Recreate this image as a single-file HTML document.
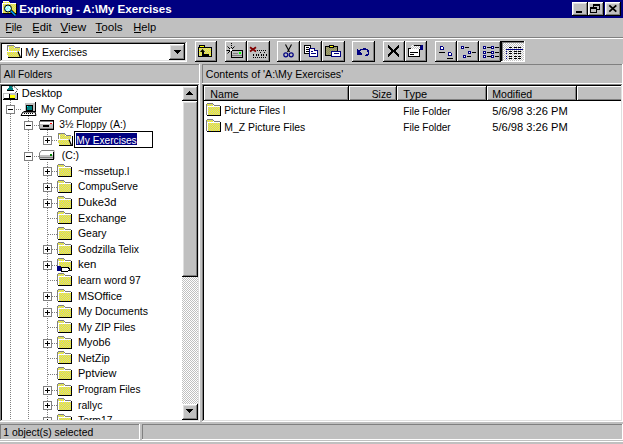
<!DOCTYPE html><html><head><meta charset="utf-8"><style>
html,body{margin:0;padding:0;background:#c0c0c0;}
body{width:623px;height:444px;overflow:hidden;font-family:"Liberation Sans",sans-serif;}
svg{display:block;}
text{shape-rendering:auto;}
</style></head><body><svg width="623" height="444" viewBox="0 0 623 444" shape-rendering="crispEdges" font-family="Liberation Sans, sans-serif"><rect x="0" y="0" width="623" height="444" fill="#c0c0c0"/>
<rect x="0" y="0" width="623" height="18" fill="#000080"/>
<text x="19.3" y="12.5" font-size="11.5" font-weight="bold" fill="#fff" textLength="152.4" lengthAdjust="spacingAndGlyphs">Exploring - A:\My Exercises</text>
<g id="ticon"></g>
<rect x="572" y="2" width="16" height="14" fill="#000"/>
<rect x="572" y="2" width="15" height="13" fill="#fff"/>
<rect x="573" y="3" width="14" height="12" fill="#808080"/>
<rect x="573" y="3" width="13" height="11" fill="#dfdfdf"/>
<rect x="574" y="4" width="12" height="10" fill="#c0c0c0"/>
<rect x="588" y="2" width="16" height="14" fill="#000"/>
<rect x="588" y="2" width="15" height="13" fill="#fff"/>
<rect x="589" y="3" width="14" height="12" fill="#808080"/>
<rect x="589" y="3" width="13" height="11" fill="#dfdfdf"/>
<rect x="590" y="4" width="12" height="10" fill="#c0c0c0"/>
<rect x="605" y="2" width="16" height="14" fill="#000"/>
<rect x="605" y="2" width="15" height="13" fill="#fff"/>
<rect x="606" y="3" width="14" height="12" fill="#808080"/>
<rect x="606" y="3" width="13" height="11" fill="#dfdfdf"/>
<rect x="607" y="4" width="12" height="10" fill="#c0c0c0"/>
<rect x="576" y="11" width="6" height="2" fill="#000"/>
<rect x="593" y="4" width="7" height="2" fill="#000"/>
<rect x="599" y="4" width="1" height="6" fill="#000"/>
<rect x="597" y="9" width="3" height="1" fill="#000"/>
<rect x="593" y="4" width="1" height="3" fill="#000"/>
<rect x="590" y="7" width="7" height="6" fill="#c0c0c0"/>
<rect x="590" y="7" width="7" height="2" fill="#000"/>
<rect x="590" y="7" width="1" height="6" fill="#000"/>
<rect x="596" y="7" width="1" height="6" fill="#000"/>
<rect x="590" y="12" width="7" height="1" fill="#000"/>
<path d="M609.3 5.3l7 6.4M616.3 5.3l-7 6.4" stroke="#000" stroke-width="1.8" shape-rendering="auto"/>
<text x="5.3" y="30.7" font-size="11.5" fill="#000" textLength="16.9" lengthAdjust="spacingAndGlyphs">File</text>
<text x="32.3" y="30.7" font-size="11.5" fill="#000" textLength="19.4" lengthAdjust="spacingAndGlyphs">Edit</text>
<text x="60.3" y="30.7" font-size="11.5" fill="#000" textLength="25.9" lengthAdjust="spacingAndGlyphs">View</text>
<text x="95.3" y="30.7" font-size="11.5" fill="#000" textLength="27.4" lengthAdjust="spacingAndGlyphs">Tools</text>
<text x="133.3" y="30.7" font-size="11.5" fill="#000" textLength="22.9" lengthAdjust="spacingAndGlyphs">Help</text>
<rect x="6" y="32" width="6" height="1" fill="#000"/>
<rect x="33" y="32" width="6" height="1" fill="#000"/>
<rect x="61" y="32" width="7" height="1" fill="#000"/>
<rect x="96" y="32" width="6" height="1" fill="#000"/>
<rect x="134" y="32" width="7" height="1" fill="#000"/>
<rect x="0" y="37" width="623" height="1" fill="#808080"/>
<rect x="0" y="38" width="623" height="1" fill="#fff"/>
<rect x="0" y="42" width="187" height="20" fill="#fff"/>
<rect x="0" y="42" width="186" height="19" fill="#808080"/>
<rect x="1" y="43" width="185" height="18" fill="#dfdfdf"/>
<rect x="1" y="43" width="184" height="17" fill="#000"/>
<rect x="2" y="44" width="183" height="16" fill="#fff"/>
<rect x="7" y="45" width="7" height="1" fill="#808080"/>
<rect x="7" y="46" width="1" height="6" fill="#808080"/>
<rect x="14" y="46" width="1" height="1" fill="#808080"/>
<rect x="15" y="47" width="5" height="1" fill="#808080"/>
<rect x="8" y="46" width="6" height="2" fill="url(#ydith)"/>
<rect x="8" y="48" width="12" height="3" fill="url(#ydith)"/>
<rect x="8" y="47" width="1" height="4" fill="#fff"/>
<rect x="21" y="48" width="1" height="10" fill="#000"/>
<rect x="8" y="57" width="14" height="1" fill="#000"/>
<path d="M6 51h12l2.5 6h-12z" fill="url(#ydith)"/>
<rect x="6" y="51" width="12" height="1" fill="#fff"/>
<path d="M18 51.5l2.5 6" stroke="#000" stroke-width="1.2" fill="none" shape-rendering="auto"/>
<text x="25.3" y="55.5" font-size="11.5" fill="#000" textLength="61.9" lengthAdjust="spacingAndGlyphs">My Exercises</text>
<rect x="169" y="44" width="16" height="16" fill="#000"/>
<rect x="169" y="44" width="15" height="15" fill="#fff"/>
<rect x="170" y="45" width="14" height="14" fill="#808080"/>
<rect x="170" y="45" width="13" height="13" fill="#dfdfdf"/>
<rect x="171" y="46" width="12" height="12" fill="#c0c0c0"/>
<path d="M173 50h8l-4 4z" fill="#000"/>
<rect x="195" y="41" width="22" height="21" fill="#000"/>
<rect x="195" y="41" width="21" height="20" fill="#fff"/>
<rect x="196" y="42" width="20" height="19" fill="#808080"/>
<rect x="196" y="42" width="19" height="18" fill="#c0c0c0"/>
<rect x="225" y="41" width="22" height="21" fill="#000"/>
<rect x="225" y="41" width="21" height="20" fill="#fff"/>
<rect x="226" y="42" width="20" height="19" fill="#808080"/>
<rect x="226" y="42" width="19" height="18" fill="#c0c0c0"/>
<rect x="247" y="41" width="23" height="21" fill="#000"/>
<rect x="247" y="41" width="22" height="20" fill="#fff"/>
<rect x="248" y="42" width="21" height="19" fill="#808080"/>
<rect x="248" y="42" width="20" height="18" fill="#c0c0c0"/>
<rect x="277" y="41" width="23" height="21" fill="#000"/>
<rect x="277" y="41" width="22" height="20" fill="#fff"/>
<rect x="278" y="42" width="21" height="19" fill="#808080"/>
<rect x="278" y="42" width="20" height="18" fill="#c0c0c0"/>
<rect x="300" y="41" width="22" height="21" fill="#000"/>
<rect x="300" y="41" width="21" height="20" fill="#fff"/>
<rect x="301" y="42" width="20" height="19" fill="#808080"/>
<rect x="301" y="42" width="19" height="18" fill="#c0c0c0"/>
<rect x="322" y="41" width="23" height="21" fill="#000"/>
<rect x="322" y="41" width="22" height="20" fill="#fff"/>
<rect x="323" y="42" width="21" height="19" fill="#808080"/>
<rect x="323" y="42" width="20" height="18" fill="#c0c0c0"/>
<rect x="352" y="41" width="23" height="21" fill="#000"/>
<rect x="352" y="41" width="22" height="20" fill="#fff"/>
<rect x="353" y="42" width="21" height="19" fill="#808080"/>
<rect x="353" y="42" width="20" height="18" fill="#c0c0c0"/>
<rect x="383" y="41" width="22" height="21" fill="#000"/>
<rect x="383" y="41" width="21" height="20" fill="#fff"/>
<rect x="384" y="42" width="20" height="19" fill="#808080"/>
<rect x="384" y="42" width="19" height="18" fill="#c0c0c0"/>
<rect x="405" y="41" width="22" height="21" fill="#000"/>
<rect x="405" y="41" width="21" height="20" fill="#fff"/>
<rect x="406" y="42" width="20" height="19" fill="#808080"/>
<rect x="406" y="42" width="19" height="18" fill="#c0c0c0"/>
<rect x="435" y="41" width="22" height="21" fill="#000"/>
<rect x="435" y="41" width="21" height="20" fill="#fff"/>
<rect x="436" y="42" width="20" height="19" fill="#808080"/>
<rect x="436" y="42" width="19" height="18" fill="#c0c0c0"/>
<rect x="457" y="41" width="22" height="21" fill="#000"/>
<rect x="457" y="41" width="21" height="20" fill="#fff"/>
<rect x="458" y="42" width="20" height="19" fill="#808080"/>
<rect x="458" y="42" width="19" height="18" fill="#c0c0c0"/>
<rect x="479" y="41" width="22" height="21" fill="#000"/>
<rect x="479" y="41" width="21" height="20" fill="#fff"/>
<rect x="480" y="42" width="20" height="19" fill="#808080"/>
<rect x="480" y="42" width="19" height="18" fill="#c0c0c0"/>
<rect x="501" y="41" width="24" height="21" fill="#fff"/>
<rect x="501" y="41" width="23" height="20" fill="#000"/>
<rect x="502" y="42" width="22" height="19" fill="#808080"/>
<defs><pattern id="chk" width="2" height="2" patternUnits="userSpaceOnUse"><rect width="2" height="2" fill="#fff"/><rect width="1" height="1" fill="#c0c0c0"/><rect x="1" y="1" width="1" height="1" fill="#c0c0c0"/></pattern></defs>
<rect x="503" y="43" width="21" height="18" fill="url(#chk)"/>
<rect x="199" y="45" width="6" height="2" fill="#000"/>
<rect x="200" y="46" width="4" height="1" fill="#ffff00"/>
<rect x="198" y="47" width="14" height="10" fill="#000"/>
<rect x="199" y="48" width="12" height="8" fill="url(#ydith)"/>
<path d="M202.5 49l-2.5 3h5z" fill="#000" shape-rendering="auto"/>
<rect x="202" y="51" width="2" height="4" fill="#000"/>
<rect x="202" y="54" width="7" height="2" fill="#000"/>
<rect x="231" y="50" width="12" height="8" fill="#000"/>
<rect x="232" y="51" width="10" height="6" fill="#c0c0c0"/>
<rect x="233" y="53" width="5" height="1" fill="#808080"/>
<rect x="239" y="52" width="2" height="2" fill="#00ff00"/>
<rect x="232" y="55" width="10" height="1" fill="#808080"/>
<rect x="231" y="43" width="1" height="1" fill="#000"/>
<rect x="231" y="45" width="1" height="1" fill="#000"/>
<rect x="231" y="47" width="1" height="1" fill="#000"/>
<path d="M227.5 46.5l3 3M227.5 53.5l3-3M234.5 46.5l-3 3M226.5 50.5h3.5" stroke="#000" stroke-width="1" shape-rendering="auto"/>
<rect x="230" y="49" width="2" height="2" fill="#fff"/>
<path d="M250 47.2l6 4.4M256 47.2l-6 4.4" stroke="#800000" stroke-width="1.8" shape-rendering="auto"/>
<rect x="257" y="50" width="1" height="1" fill="#000"/>
<rect x="259" y="50" width="1" height="1" fill="#000"/>
<rect x="261" y="50" width="1" height="1" fill="#000"/>
<rect x="263" y="50" width="1" height="1" fill="#000"/>
<rect x="265" y="50" width="1" height="1" fill="#000"/>
<rect x="260" y="52" width="1" height="1" fill="#000"/>
<rect x="264" y="52" width="1" height="1" fill="#000"/>
<rect x="253" y="54" width="1" height="2" fill="#000"/>
<rect x="256" y="54" width="1" height="2" fill="#000"/>
<rect x="258" y="54" width="1" height="2" fill="#000"/>
<rect x="261" y="54" width="1" height="2" fill="#000"/>
<rect x="263" y="54" width="1" height="2" fill="#000"/>
<rect x="266" y="54" width="1" height="2" fill="#000"/>
<rect x="253" y="57" width="1" height="1" fill="#000"/>
<rect x="255" y="57" width="1" height="1" fill="#000"/>
<rect x="257" y="57" width="1" height="1" fill="#000"/>
<rect x="259" y="57" width="1" height="1" fill="#000"/>
<rect x="261" y="57" width="1" height="1" fill="#000"/>
<rect x="263" y="57" width="1" height="1" fill="#000"/>
<rect x="265" y="57" width="1" height="1" fill="#000"/>
<path d="M285.5 44.5l4 7.5M291.5 44.5l-4 7.5" stroke="#000" stroke-width="1.1" shape-rendering="auto"/>
<circle cx="285.8" cy="54.8" r="2" fill="none" stroke="#000080" stroke-width="1.2" shape-rendering="auto"/><circle cx="291.2" cy="54.8" r="2" fill="none" stroke="#000080" stroke-width="1.2" shape-rendering="auto"/>
<rect x="304" y="45" width="7" height="9" fill="#000"/>
<rect x="305" y="46" width="5" height="7" fill="#fff"/>
<rect x="306" y="47" width="3" height="1" fill="#000"/>
<rect x="306" y="49" width="3" height="1" fill="#000"/>
<rect x="306" y="51" width="3" height="1" fill="#000"/>
<rect x="309" y="48" width="9" height="9" fill="#000080"/>
<rect x="310" y="49" width="7" height="7" fill="#fff"/>
<rect x="315" y="48" width="3" height="2" fill="#c0c0c0"/>
<rect x="314" y="48" width="1" height="3" fill="#000080"/>
<rect x="314" y="50" width="4" height="1" fill="#000080"/>
<rect x="311" y="51" width="2" height="1" fill="#000080"/>
<rect x="311" y="53" width="5" height="1" fill="#000080"/>
<rect x="325" y="46" width="13" height="10" fill="#000"/>
<rect x="326" y="47" width="11" height="8" fill="#808040"/>
<rect x="326" y="47" width="11" height="8" fill="url(#chk)" opacity="0.25"/>
<rect x="329" y="45" width="5" height="3" fill="#000"/>
<rect x="330" y="46" width="3" height="1" fill="#ffff00"/>
<rect x="331" y="51" width="10" height="6" fill="#000080"/>
<rect x="332" y="52" width="8" height="4" fill="#fff"/>
<rect x="334" y="53" width="5" height="1" fill="#000080"/>
<path d="M359 51.5c2-3 8-3.5 9.5 0c1 2.5-1 4-3 3.5" fill="none" stroke="#000080" stroke-width="1.6"/>
<path d="M357 48.5v6h5.5z" fill="#000080"/>
<path d="M388 46l11 10M399 46l-11 10" stroke="#000" stroke-width="2"/>
<rect x="408" y="48" width="12" height="9" fill="#000"/>
<rect x="409" y="49" width="10" height="7" fill="#fff"/>
<rect x="410" y="52" width="8" height="1" fill="#000"/>
<rect x="410" y="54" width="4" height="1" fill="#000"/>
<rect x="411" y="45" width="10" height="4" fill="url(#chk)"/>
<rect x="420" y="45" width="3" height="5" fill="#000080"/>
<rect x="414" y="45" width="7" height="1" fill="#000"/>
<rect x="440" y="46" width="4" height="4" fill="#000080"/>
<rect x="441" y="47" width="2" height="2" fill="#fff"/>
<rect x="443" y="46" width="1" height="1" fill="#c0c0c0"/>
<rect x="439" y="52" width="6" height="1" fill="#000"/>
<rect x="448" y="52" width="4" height="4" fill="#000080"/>
<rect x="449" y="53" width="2" height="2" fill="#fff"/>
<rect x="451" y="52" width="1" height="1" fill="#c0c0c0"/>
<rect x="447" y="58" width="6" height="1" fill="#000"/>
<rect x="461" y="46" width="3" height="3" fill="#000080"/>
<rect x="462" y="47" width="1" height="1" fill="#fff"/>
<rect x="465" y="47" width="4" height="1" fill="#000"/>
<rect x="468" y="51" width="3" height="3" fill="#000080"/>
<rect x="469" y="52" width="1" height="1" fill="#fff"/>
<rect x="472" y="52" width="4" height="1" fill="#000"/>
<rect x="463" y="55" width="3" height="3" fill="#000080"/>
<rect x="464" y="56" width="1" height="1" fill="#fff"/>
<rect x="467" y="56" width="4" height="1" fill="#000"/>
<rect x="483" y="46" width="3" height="3" fill="#000080"/>
<rect x="484" y="47" width="1" height="1" fill="#fff"/>
<rect x="487" y="47" width="4" height="1" fill="#000"/>
<rect x="491" y="46" width="3" height="3" fill="#000080"/>
<rect x="492" y="47" width="1" height="1" fill="#fff"/>
<rect x="495" y="47" width="4" height="1" fill="#000"/>
<rect x="483" y="51" width="3" height="3" fill="#000080"/>
<rect x="484" y="52" width="1" height="1" fill="#fff"/>
<rect x="487" y="52" width="4" height="1" fill="#000"/>
<rect x="491" y="51" width="3" height="3" fill="#000080"/>
<rect x="492" y="52" width="1" height="1" fill="#fff"/>
<rect x="495" y="52" width="4" height="1" fill="#000"/>
<rect x="483" y="55" width="3" height="3" fill="#000080"/>
<rect x="484" y="56" width="1" height="1" fill="#fff"/>
<rect x="487" y="56" width="4" height="1" fill="#000"/>
<rect x="491" y="55" width="3" height="3" fill="#000080"/>
<rect x="492" y="56" width="1" height="1" fill="#fff"/>
<rect x="495" y="56" width="4" height="1" fill="#000"/>
<rect x="506" y="49" width="17" height="1" fill="#000080"/>
<rect x="506" y="51" width="1" height="1" fill="#000080"/>
<rect x="509" y="51" width="3" height="1" fill="#000"/>
<rect x="514" y="51" width="3" height="1" fill="#000"/>
<rect x="518" y="51" width="3" height="1" fill="#000"/>
<rect x="506" y="53" width="1" height="1" fill="#000080"/>
<rect x="509" y="53" width="3" height="1" fill="#000"/>
<rect x="514" y="53" width="3" height="1" fill="#000"/>
<rect x="518" y="53" width="3" height="1" fill="#000"/>
<rect x="506" y="56" width="1" height="1" fill="#000080"/>
<rect x="509" y="56" width="3" height="1" fill="#000"/>
<rect x="514" y="56" width="3" height="1" fill="#000"/>
<rect x="518" y="56" width="3" height="1" fill="#000"/>
<rect x="506" y="58" width="1" height="1" fill="#000080"/>
<rect x="509" y="58" width="3" height="1" fill="#000"/>
<rect x="514" y="58" width="3" height="1" fill="#000"/>
<rect x="518" y="58" width="3" height="1" fill="#000"/>
<rect x="509" y="47" width="3" height="1" fill="#000"/>
<rect x="514" y="47" width="3" height="1" fill="#000"/>
<rect x="518" y="47" width="3" height="1" fill="#000"/>
<rect x="3" y="1" width="6" height="1" fill="#fff"/>
<rect x="3" y="2" width="7" height="2" fill="url(#ydith)"/>
<rect x="3" y="4" width="14" height="10" fill="#000"/>
<rect x="2" y="3" width="14" height="10" fill="#fff"/>
<rect x="3" y="4" width="13" height="9" fill="url(#ydith)"/>
<path d="M10.5 10.5l5 5" stroke="#000" stroke-width="3" shape-rendering="auto"/>
<path d="M10.5 10.5l5 5" stroke="#00a0ff" stroke-width="1.5" shape-rendering="auto"/>
<circle cx="8" cy="8.5" r="3.5" fill="#a0ffff" stroke="#000" stroke-width="1" shape-rendering="auto"/>
<rect x="6" y="7" width="1" height="1" fill="#fff"/>
<rect x="8" y="9" width="1" height="1" fill="#fff"/>
<rect x="7" y="10" width="1" height="1" fill="#fff"/>
<rect x="9" y="7" width="1" height="1" fill="#fff"/>
<rect x="0" y="64" width="200" height="20" fill="#fff"/>
<rect x="0" y="64" width="199" height="19" fill="#808080"/>
<rect x="1" y="65" width="198" height="18" fill="#c0c0c0"/>
<text x="3.8" y="77.8" font-size="11.5" fill="#000" textLength="48.4" lengthAdjust="spacingAndGlyphs">All Folders</text>
<rect x="202" y="64" width="421" height="20" fill="#fff"/>
<rect x="202" y="64" width="420" height="19" fill="#808080"/>
<rect x="203" y="65" width="419" height="18" fill="#c0c0c0"/>
<text x="205.8" y="77.8" font-size="11.5" fill="#000" textLength="137.4" lengthAdjust="spacingAndGlyphs">Contents of 'A:\My Exercises'</text>
<rect x="0" y="84" width="200" height="338" fill="#fff"/>
<rect x="0" y="84" width="199" height="337" fill="#808080"/>
<rect x="1" y="85" width="198" height="336" fill="#dfdfdf"/>
<rect x="1" y="85" width="197" height="335" fill="#000"/>
<rect x="2" y="86" width="196" height="334" fill="#fff"/>
<rect x="182" y="86" width="16" height="15" fill="#000"/>
<rect x="182" y="86" width="15" height="14" fill="#fff"/>
<rect x="183" y="87" width="14" height="13" fill="#808080"/>
<rect x="183" y="87" width="13" height="12" fill="#dfdfdf"/>
<rect x="184" y="88" width="12" height="11" fill="#c0c0c0"/>
<path d="M186 95h7l-3.5-4z" fill="#000"/>
<rect x="182" y="404" width="16" height="16" fill="#000"/>
<rect x="182" y="404" width="15" height="15" fill="#fff"/>
<rect x="183" y="405" width="14" height="14" fill="#808080"/>
<rect x="183" y="405" width="13" height="13" fill="#dfdfdf"/>
<rect x="184" y="406" width="12" height="12" fill="#c0c0c0"/>
<path d="M186 409h7l-3.5 4z" fill="#000"/>
<rect x="182" y="277" width="16" height="127" fill="url(#chk)"/>
<rect x="182" y="101" width="16" height="176" fill="#000"/>
<rect x="182" y="101" width="15" height="175" fill="#fff"/>
<rect x="183" y="102" width="14" height="174" fill="#808080"/>
<rect x="183" y="102" width="13" height="173" fill="#dfdfdf"/>
<rect x="184" y="103" width="12" height="172" fill="#c0c0c0"/>
<defs><pattern id="ydith" width="2" height="2" patternUnits="userSpaceOnUse"><rect width="2" height="2" fill="#ffff00"/><rect width="1" height="1" fill="#c0c0c0"/><rect x="1" y="1" width="1" height="1" fill="#c0c0c0"/></pattern><pattern id="dotv" width="1" height="2" patternUnits="userSpaceOnUse"><rect width="1" height="1" fill="#808080"/></pattern><pattern id="doth" width="2" height="1" patternUnits="userSpaceOnUse"><rect width="1" height="1" fill="#808080"/></pattern><clipPath id="treeclip"><rect x="2" y="86" width="180" height="334"/></clipPath></defs>
<g clip-path="url(#treeclip)">
<rect x="10" y="100" width="1" height="330" fill="url(#dotv)"/>
<rect x="28" y="116" width="1" height="314" fill="url(#dotv)"/>
<rect x="47" y="129" width="1" height="8" fill="url(#dotv)"/>
<rect x="47" y="162" width="1" height="268" fill="url(#dotv)"/>
<path d="M9.5 86h2l2 3.5h-6z" fill="#008080"/>
<rect x="7" y="90" width="7" height="1" fill="#000"/>
<path d="M12 87c2 -1 3 0 4 1s2 1 1 3l-2 2" fill="none" stroke="#000" stroke-dasharray="1 1" shape-rendering="auto"/>
<rect x="3" y="93" width="15" height="7" fill="#000"/>
<rect x="3" y="93" width="14" height="6" fill="#c0c0c0"/>
<rect x="4" y="94" width="5" height="4" fill="#fff"/>
<rect x="10" y="95" width="5" height="3" fill="#ffff00"/>
<rect x="9" y="94" width="1" height="4" fill="#000"/>
<rect x="4" y="98" width="11" height="1" fill="#000"/>
<text x="21.8" y="97.0" font-size="11.5" fill="#000" textLength="40.4" lengthAdjust="spacingAndGlyphs">Desktop</text>
<rect x="15" y="109" width="6" height="1" fill="url(#doth)"/>
<rect x="6" y="105" width="9" height="9" fill="#808080"/>
<rect x="7" y="106" width="7" height="7" fill="#fff"/>
<rect x="8" y="109" width="5" height="1" fill="#000"/>
<rect x="24" y="102" width="12" height="10" fill="#000"/>
<rect x="24" y="102" width="11" height="9" fill="#fff"/>
<rect x="25" y="103" width="10" height="8" fill="#c0c0c0"/>
<rect x="26" y="105" width="7" height="6" fill="#000"/>
<rect x="27" y="106" width="5" height="4" fill="#008080"/>
<rect x="27" y="106" width="1" height="1" fill="#00ffff"/>
<path d="M23 112h12l1 3.5h-15z" fill="#fff" stroke="#000" stroke-width="1" shape-rendering="auto"/>
<rect x="24" y="113" width="1" height="1" fill="#000"/>
<rect x="26" y="113" width="1" height="1" fill="#000"/>
<rect x="28" y="113" width="1" height="1" fill="#000"/>
<rect x="30" y="113" width="1" height="1" fill="#000"/>
<rect x="32" y="113" width="1" height="1" fill="#000"/>
<text x="41.1" y="112.58" font-size="11.5" fill="#000" textLength="60.9" lengthAdjust="spacingAndGlyphs">My Computer</text>
<rect x="33" y="125" width="6" height="1" fill="url(#doth)"/>
<rect x="24" y="121" width="9" height="9" fill="#808080"/>
<rect x="25" y="122" width="7" height="7" fill="#fff"/>
<rect x="26" y="125" width="5" height="1" fill="#000"/>
<rect x="40" y="120" width="14" height="9" fill="#000"/>
<rect x="39" y="121" width="14" height="8" fill="#808080"/>
<rect x="40" y="122" width="13" height="6" fill="#fff"/>
<rect x="40" y="124" width="13" height="4" fill="#c0c0c0"/>
<rect x="40" y="129" width="14" height="1" fill="#000"/>
<rect x="43" y="125" width="6" height="2" fill="#000"/>
<rect x="50" y="123" width="2" height="1" fill="#ff0000"/>
<text x="59.3" y="128.16" font-size="11.5" fill="#000" textLength="66.9" lengthAdjust="spacingAndGlyphs">3½ Floppy (A:)</text>
<rect x="52" y="140" width="5" height="1" fill="url(#doth)"/>
<rect x="43" y="136" width="9" height="9" fill="#808080"/>
<rect x="44" y="137" width="7" height="7" fill="#fff"/>
<rect x="45" y="140" width="5" height="1" fill="#000"/>
<rect x="47" y="138" width="1" height="5" fill="#000"/>
<rect x="58" y="133" width="7" height="1" fill="#808080"/>
<rect x="58" y="134" width="1" height="6" fill="#808080"/>
<rect x="65" y="134" width="1" height="1" fill="#808080"/>
<rect x="66" y="135" width="5" height="1" fill="#808080"/>
<rect x="59" y="134" width="6" height="2" fill="url(#ydith)"/>
<rect x="59" y="136" width="12" height="3" fill="url(#ydith)"/>
<rect x="59" y="135" width="1" height="4" fill="#fff"/>
<rect x="72" y="136" width="1" height="10" fill="#000"/>
<rect x="59" y="145" width="14" height="1" fill="#000"/>
<path d="M57 139h12l2.5 6h-12z" fill="url(#ydith)"/>
<rect x="57" y="139" width="12" height="1" fill="#fff"/>
<path d="M69 139.5l2.5 6" stroke="#000" stroke-width="1.2" fill="none" shape-rendering="auto"/>
<rect x="74" y="131" width="79" height="17" fill="#000"/>
<rect x="75" y="132" width="77" height="15" fill="#fff"/>
<rect x="76" y="133" width="61" height="12" fill="#000080"/>
<text x="76.3" y="143.74" font-size="11.5" fill="#fff" textLength="60.4" lengthAdjust="spacingAndGlyphs">My Exercises</text>
<rect x="33" y="156" width="6" height="1" fill="url(#doth)"/>
<rect x="24" y="152" width="9" height="9" fill="#808080"/>
<rect x="25" y="153" width="7" height="7" fill="#fff"/>
<rect x="26" y="156" width="5" height="1" fill="#000"/>
<path d="M41.5 150.5h12.5v8.5h-14.5v-6z" fill="#fff" stroke="#808080" stroke-width="1" shape-rendering="auto"/>
<rect x="40" y="155" width="13" height="2" fill="#c0c0c0"/>
<rect x="50" y="154" width="2" height="2" fill="#008000"/>
<rect x="40" y="157" width="13" height="1" fill="#808080"/>
<rect x="40" y="159" width="14" height="1" fill="#000"/>
<rect x="53" y="152" width="1" height="7" fill="#000"/>
<text x="61.7" y="159.32" font-size="11.5" fill="#000" textLength="17.4" lengthAdjust="spacingAndGlyphs">(C:)</text>
<rect x="52" y="171" width="5" height="1" fill="url(#doth)"/>
<rect x="43" y="167" width="9" height="9" fill="#808080"/>
<rect x="44" y="168" width="7" height="7" fill="#fff"/>
<rect x="45" y="171" width="5" height="1" fill="#000"/>
<rect x="47" y="169" width="1" height="5" fill="#000"/>
<rect x="58" y="164" width="6" height="1" fill="#808080"/>
<rect x="57" y="165" width="1" height="11" fill="#808080"/>
<rect x="64" y="165" width="1" height="1" fill="#808080"/>
<rect x="65" y="166" width="6" height="1" fill="#808080"/>
<rect x="58" y="165" width="6" height="2" fill="url(#ydith)"/>
<rect x="58" y="167" width="13" height="1" fill="#fff"/>
<rect x="58" y="167" width="1" height="9" fill="#fff"/>
<rect x="59" y="168" width="12" height="8" fill="url(#ydith)"/>
<rect x="71" y="167" width="1" height="10" fill="#000"/>
<rect x="58" y="176" width="14" height="1" fill="#000"/>
<text x="78.0" y="174.9" font-size="11.5" fill="#000" textLength="51.4" lengthAdjust="spacingAndGlyphs">~mssetup.l</text>
<rect x="52" y="187" width="5" height="1" fill="url(#doth)"/>
<rect x="43" y="183" width="9" height="9" fill="#808080"/>
<rect x="44" y="184" width="7" height="7" fill="#fff"/>
<rect x="45" y="187" width="5" height="1" fill="#000"/>
<rect x="47" y="185" width="1" height="5" fill="#000"/>
<rect x="58" y="180" width="6" height="1" fill="#808080"/>
<rect x="57" y="181" width="1" height="11" fill="#808080"/>
<rect x="64" y="181" width="1" height="1" fill="#808080"/>
<rect x="65" y="182" width="6" height="1" fill="#808080"/>
<rect x="58" y="181" width="6" height="2" fill="url(#ydith)"/>
<rect x="58" y="183" width="13" height="1" fill="#fff"/>
<rect x="58" y="183" width="1" height="9" fill="#fff"/>
<rect x="59" y="184" width="12" height="8" fill="url(#ydith)"/>
<rect x="71" y="183" width="1" height="10" fill="#000"/>
<rect x="58" y="192" width="14" height="1" fill="#000"/>
<text x="78.0" y="190.48000000000002" font-size="11.5" fill="#000" textLength="59.9" lengthAdjust="spacingAndGlyphs">CompuServe</text>
<rect x="52" y="203" width="5" height="1" fill="url(#doth)"/>
<rect x="43" y="199" width="9" height="9" fill="#808080"/>
<rect x="44" y="200" width="7" height="7" fill="#fff"/>
<rect x="45" y="203" width="5" height="1" fill="#000"/>
<rect x="47" y="201" width="1" height="5" fill="#000"/>
<rect x="58" y="196" width="6" height="1" fill="#808080"/>
<rect x="57" y="197" width="1" height="11" fill="#808080"/>
<rect x="64" y="197" width="1" height="1" fill="#808080"/>
<rect x="65" y="198" width="6" height="1" fill="#808080"/>
<rect x="58" y="197" width="6" height="2" fill="url(#ydith)"/>
<rect x="58" y="199" width="13" height="1" fill="#fff"/>
<rect x="58" y="199" width="1" height="9" fill="#fff"/>
<rect x="59" y="200" width="12" height="8" fill="url(#ydith)"/>
<rect x="71" y="199" width="1" height="10" fill="#000"/>
<rect x="58" y="208" width="14" height="1" fill="#000"/>
<text x="78.0" y="206.06" font-size="11.5" fill="#000" textLength="38.4" lengthAdjust="spacingAndGlyphs">Duke3d</text>
<rect x="48" y="218" width="9" height="1" fill="url(#doth)"/>
<rect x="58" y="211" width="6" height="1" fill="#808080"/>
<rect x="57" y="212" width="1" height="11" fill="#808080"/>
<rect x="64" y="212" width="1" height="1" fill="#808080"/>
<rect x="65" y="213" width="6" height="1" fill="#808080"/>
<rect x="58" y="212" width="6" height="2" fill="url(#ydith)"/>
<rect x="58" y="214" width="13" height="1" fill="#fff"/>
<rect x="58" y="214" width="1" height="9" fill="#fff"/>
<rect x="59" y="215" width="12" height="8" fill="url(#ydith)"/>
<rect x="71" y="214" width="1" height="10" fill="#000"/>
<rect x="58" y="223" width="14" height="1" fill="#000"/>
<text x="78.0" y="221.64" font-size="11.5" fill="#000" textLength="48.4" lengthAdjust="spacingAndGlyphs">Exchange</text>
<rect x="48" y="234" width="9" height="1" fill="url(#doth)"/>
<rect x="58" y="227" width="6" height="1" fill="#808080"/>
<rect x="57" y="228" width="1" height="11" fill="#808080"/>
<rect x="64" y="228" width="1" height="1" fill="#808080"/>
<rect x="65" y="229" width="6" height="1" fill="#808080"/>
<rect x="58" y="228" width="6" height="2" fill="url(#ydith)"/>
<rect x="58" y="230" width="13" height="1" fill="#fff"/>
<rect x="58" y="230" width="1" height="9" fill="#fff"/>
<rect x="59" y="231" width="12" height="8" fill="url(#ydith)"/>
<rect x="71" y="230" width="1" height="10" fill="#000"/>
<rect x="58" y="239" width="14" height="1" fill="#000"/>
<text x="78.0" y="237.22" font-size="11.5" fill="#000" textLength="28.4" lengthAdjust="spacingAndGlyphs">Geary</text>
<rect x="52" y="249" width="5" height="1" fill="url(#doth)"/>
<rect x="43" y="245" width="9" height="9" fill="#808080"/>
<rect x="44" y="246" width="7" height="7" fill="#fff"/>
<rect x="45" y="249" width="5" height="1" fill="#000"/>
<rect x="47" y="247" width="1" height="5" fill="#000"/>
<rect x="58" y="242" width="6" height="1" fill="#808080"/>
<rect x="57" y="243" width="1" height="11" fill="#808080"/>
<rect x="64" y="243" width="1" height="1" fill="#808080"/>
<rect x="65" y="244" width="6" height="1" fill="#808080"/>
<rect x="58" y="243" width="6" height="2" fill="url(#ydith)"/>
<rect x="58" y="245" width="13" height="1" fill="#fff"/>
<rect x="58" y="245" width="1" height="9" fill="#fff"/>
<rect x="59" y="246" width="12" height="8" fill="url(#ydith)"/>
<rect x="71" y="245" width="1" height="10" fill="#000"/>
<rect x="58" y="254" width="14" height="1" fill="#000"/>
<text x="78.0" y="252.8" font-size="11.5" fill="#000" textLength="60.9" lengthAdjust="spacingAndGlyphs">Godzilla Telix</text>
<rect x="52" y="265" width="5" height="1" fill="url(#doth)"/>
<rect x="43" y="261" width="9" height="9" fill="#808080"/>
<rect x="44" y="262" width="7" height="7" fill="#fff"/>
<rect x="45" y="265" width="5" height="1" fill="#000"/>
<rect x="47" y="263" width="1" height="5" fill="#000"/>
<rect x="58" y="258" width="6" height="1" fill="#808080"/>
<rect x="57" y="259" width="1" height="11" fill="#808080"/>
<rect x="64" y="259" width="1" height="1" fill="#808080"/>
<rect x="65" y="260" width="6" height="1" fill="#808080"/>
<rect x="58" y="259" width="6" height="2" fill="url(#ydith)"/>
<rect x="58" y="261" width="13" height="1" fill="#fff"/>
<rect x="58" y="261" width="1" height="9" fill="#fff"/>
<rect x="59" y="262" width="12" height="8" fill="url(#ydith)"/>
<rect x="71" y="261" width="1" height="10" fill="#000"/>
<rect x="58" y="270" width="14" height="1" fill="#000"/>
<rect x="57" y="266" width="4" height="5" fill="#000080"/>
<path d="M61 267h6l3 2l-2 2h-7z" fill="#fff" stroke="#000" stroke-width="1"/>
<text x="78.0" y="268.38" font-size="11.5" fill="#000" textLength="18.4" lengthAdjust="spacingAndGlyphs">ken</text>
<rect x="48" y="280" width="9" height="1" fill="url(#doth)"/>
<rect x="58" y="273" width="6" height="1" fill="#808080"/>
<rect x="57" y="274" width="1" height="11" fill="#808080"/>
<rect x="64" y="274" width="1" height="1" fill="#808080"/>
<rect x="65" y="275" width="6" height="1" fill="#808080"/>
<rect x="58" y="274" width="6" height="2" fill="url(#ydith)"/>
<rect x="58" y="276" width="13" height="1" fill="#fff"/>
<rect x="58" y="276" width="1" height="9" fill="#fff"/>
<rect x="59" y="277" width="12" height="8" fill="url(#ydith)"/>
<rect x="71" y="276" width="1" height="10" fill="#000"/>
<rect x="58" y="285" width="14" height="1" fill="#000"/>
<text x="78.0" y="283.96000000000004" font-size="11.5" fill="#000" textLength="62.9" lengthAdjust="spacingAndGlyphs">learn word 97</text>
<rect x="52" y="296" width="5" height="1" fill="url(#doth)"/>
<rect x="43" y="292" width="9" height="9" fill="#808080"/>
<rect x="44" y="293" width="7" height="7" fill="#fff"/>
<rect x="45" y="296" width="5" height="1" fill="#000"/>
<rect x="47" y="294" width="1" height="5" fill="#000"/>
<rect x="58" y="289" width="6" height="1" fill="#808080"/>
<rect x="57" y="290" width="1" height="11" fill="#808080"/>
<rect x="64" y="290" width="1" height="1" fill="#808080"/>
<rect x="65" y="291" width="6" height="1" fill="#808080"/>
<rect x="58" y="290" width="6" height="2" fill="url(#ydith)"/>
<rect x="58" y="292" width="13" height="1" fill="#fff"/>
<rect x="58" y="292" width="1" height="9" fill="#fff"/>
<rect x="59" y="293" width="12" height="8" fill="url(#ydith)"/>
<rect x="71" y="292" width="1" height="10" fill="#000"/>
<rect x="58" y="301" width="14" height="1" fill="#000"/>
<text x="78.0" y="299.53999999999996" font-size="11.5" fill="#000" textLength="44.1" lengthAdjust="spacingAndGlyphs">MSOffice</text>
<rect x="52" y="312" width="5" height="1" fill="url(#doth)"/>
<rect x="43" y="308" width="9" height="9" fill="#808080"/>
<rect x="44" y="309" width="7" height="7" fill="#fff"/>
<rect x="45" y="312" width="5" height="1" fill="#000"/>
<rect x="47" y="310" width="1" height="5" fill="#000"/>
<rect x="58" y="305" width="6" height="1" fill="#808080"/>
<rect x="57" y="306" width="1" height="11" fill="#808080"/>
<rect x="64" y="306" width="1" height="1" fill="#808080"/>
<rect x="65" y="307" width="6" height="1" fill="#808080"/>
<rect x="58" y="306" width="6" height="2" fill="url(#ydith)"/>
<rect x="58" y="308" width="13" height="1" fill="#fff"/>
<rect x="58" y="308" width="1" height="9" fill="#fff"/>
<rect x="59" y="309" width="12" height="8" fill="url(#ydith)"/>
<rect x="71" y="308" width="1" height="10" fill="#000"/>
<rect x="58" y="317" width="14" height="1" fill="#000"/>
<text x="78.0" y="315.12" font-size="11.5" fill="#000" textLength="69.9" lengthAdjust="spacingAndGlyphs">My Documents</text>
<rect x="48" y="327" width="9" height="1" fill="url(#doth)"/>
<rect x="58" y="320" width="6" height="1" fill="#808080"/>
<rect x="57" y="321" width="1" height="11" fill="#808080"/>
<rect x="64" y="321" width="1" height="1" fill="#808080"/>
<rect x="65" y="322" width="6" height="1" fill="#808080"/>
<rect x="58" y="321" width="6" height="2" fill="url(#ydith)"/>
<rect x="58" y="323" width="13" height="1" fill="#fff"/>
<rect x="58" y="323" width="1" height="9" fill="#fff"/>
<rect x="59" y="324" width="12" height="8" fill="url(#ydith)"/>
<rect x="71" y="323" width="1" height="10" fill="#000"/>
<rect x="58" y="332" width="14" height="1" fill="#000"/>
<text x="78.0" y="330.7" font-size="11.5" fill="#000" textLength="57.4" lengthAdjust="spacingAndGlyphs">My ZIP Files</text>
<rect x="52" y="343" width="5" height="1" fill="url(#doth)"/>
<rect x="43" y="339" width="9" height="9" fill="#808080"/>
<rect x="44" y="340" width="7" height="7" fill="#fff"/>
<rect x="45" y="343" width="5" height="1" fill="#000"/>
<rect x="47" y="341" width="1" height="5" fill="#000"/>
<rect x="58" y="336" width="6" height="1" fill="#808080"/>
<rect x="57" y="337" width="1" height="11" fill="#808080"/>
<rect x="64" y="337" width="1" height="1" fill="#808080"/>
<rect x="65" y="338" width="6" height="1" fill="#808080"/>
<rect x="58" y="337" width="6" height="2" fill="url(#ydith)"/>
<rect x="58" y="339" width="13" height="1" fill="#fff"/>
<rect x="58" y="339" width="1" height="9" fill="#fff"/>
<rect x="59" y="340" width="12" height="8" fill="url(#ydith)"/>
<rect x="71" y="339" width="1" height="10" fill="#000"/>
<rect x="58" y="348" width="14" height="1" fill="#000"/>
<text x="78.0" y="346.28" font-size="11.5" fill="#000" textLength="32.4" lengthAdjust="spacingAndGlyphs">Myob6</text>
<rect x="48" y="358" width="9" height="1" fill="url(#doth)"/>
<rect x="58" y="351" width="6" height="1" fill="#808080"/>
<rect x="57" y="352" width="1" height="11" fill="#808080"/>
<rect x="64" y="352" width="1" height="1" fill="#808080"/>
<rect x="65" y="353" width="6" height="1" fill="#808080"/>
<rect x="58" y="352" width="6" height="2" fill="url(#ydith)"/>
<rect x="58" y="354" width="13" height="1" fill="#fff"/>
<rect x="58" y="354" width="1" height="9" fill="#fff"/>
<rect x="59" y="355" width="12" height="8" fill="url(#ydith)"/>
<rect x="71" y="354" width="1" height="10" fill="#000"/>
<rect x="58" y="363" width="14" height="1" fill="#000"/>
<text x="78.0" y="361.86" font-size="11.5" fill="#000" textLength="31.9" lengthAdjust="spacingAndGlyphs">NetZip</text>
<rect x="48" y="374" width="9" height="1" fill="url(#doth)"/>
<rect x="58" y="367" width="6" height="1" fill="#808080"/>
<rect x="57" y="368" width="1" height="11" fill="#808080"/>
<rect x="64" y="368" width="1" height="1" fill="#808080"/>
<rect x="65" y="369" width="6" height="1" fill="#808080"/>
<rect x="58" y="368" width="6" height="2" fill="url(#ydith)"/>
<rect x="58" y="370" width="13" height="1" fill="#fff"/>
<rect x="58" y="370" width="1" height="9" fill="#fff"/>
<rect x="59" y="371" width="12" height="8" fill="url(#ydith)"/>
<rect x="71" y="370" width="1" height="10" fill="#000"/>
<rect x="58" y="379" width="14" height="1" fill="#000"/>
<text x="78.0" y="377.44" font-size="11.5" fill="#000" textLength="38.4" lengthAdjust="spacingAndGlyphs">Pptview</text>
<rect x="52" y="390" width="5" height="1" fill="url(#doth)"/>
<rect x="43" y="386" width="9" height="9" fill="#808080"/>
<rect x="44" y="387" width="7" height="7" fill="#fff"/>
<rect x="45" y="390" width="5" height="1" fill="#000"/>
<rect x="47" y="388" width="1" height="5" fill="#000"/>
<rect x="58" y="383" width="6" height="1" fill="#808080"/>
<rect x="57" y="384" width="1" height="11" fill="#808080"/>
<rect x="64" y="384" width="1" height="1" fill="#808080"/>
<rect x="65" y="385" width="6" height="1" fill="#808080"/>
<rect x="58" y="384" width="6" height="2" fill="url(#ydith)"/>
<rect x="58" y="386" width="13" height="1" fill="#fff"/>
<rect x="58" y="386" width="1" height="9" fill="#fff"/>
<rect x="59" y="387" width="12" height="8" fill="url(#ydith)"/>
<rect x="71" y="386" width="1" height="10" fill="#000"/>
<rect x="58" y="395" width="14" height="1" fill="#000"/>
<text x="78.0" y="393.02" font-size="11.5" fill="#000" textLength="62.4" lengthAdjust="spacingAndGlyphs">Program Files</text>
<rect x="52" y="405" width="5" height="1" fill="url(#doth)"/>
<rect x="43" y="401" width="9" height="9" fill="#808080"/>
<rect x="44" y="402" width="7" height="7" fill="#fff"/>
<rect x="45" y="405" width="5" height="1" fill="#000"/>
<rect x="47" y="403" width="1" height="5" fill="#000"/>
<rect x="58" y="398" width="6" height="1" fill="#808080"/>
<rect x="57" y="399" width="1" height="11" fill="#808080"/>
<rect x="64" y="399" width="1" height="1" fill="#808080"/>
<rect x="65" y="400" width="6" height="1" fill="#808080"/>
<rect x="58" y="399" width="6" height="2" fill="url(#ydith)"/>
<rect x="58" y="401" width="13" height="1" fill="#fff"/>
<rect x="58" y="401" width="1" height="9" fill="#fff"/>
<rect x="59" y="402" width="12" height="8" fill="url(#ydith)"/>
<rect x="71" y="401" width="1" height="10" fill="#000"/>
<rect x="58" y="410" width="14" height="1" fill="#000"/>
<text x="78.0" y="408.6" font-size="11.5" fill="#000" textLength="24.4" lengthAdjust="spacingAndGlyphs">rallyc</text>
<rect x="52" y="421" width="5" height="1" fill="url(#doth)"/>
<rect x="43" y="417" width="9" height="9" fill="#808080"/>
<rect x="44" y="418" width="7" height="7" fill="#fff"/>
<rect x="45" y="421" width="5" height="1" fill="#000"/>
<rect x="47" y="419" width="1" height="5" fill="#000"/>
<rect x="58" y="414" width="6" height="1" fill="#808080"/>
<rect x="57" y="415" width="1" height="11" fill="#808080"/>
<rect x="64" y="415" width="1" height="1" fill="#808080"/>
<rect x="65" y="416" width="6" height="1" fill="#808080"/>
<rect x="58" y="415" width="6" height="2" fill="url(#ydith)"/>
<rect x="58" y="417" width="13" height="1" fill="#fff"/>
<rect x="58" y="417" width="1" height="9" fill="#fff"/>
<rect x="59" y="418" width="12" height="8" fill="url(#ydith)"/>
<rect x="71" y="417" width="1" height="10" fill="#000"/>
<rect x="58" y="426" width="14" height="1" fill="#000"/>
<text x="78.0" y="424.18" font-size="11.5" fill="#000" textLength="34.4" lengthAdjust="spacingAndGlyphs">Term17</text>
</g>
<rect x="202" y="84" width="421" height="338" fill="#fff"/>
<rect x="202" y="84" width="420" height="337" fill="#808080"/>
<rect x="203" y="85" width="419" height="336" fill="#dfdfdf"/>
<rect x="203" y="85" width="418" height="335" fill="#000"/>
<rect x="204" y="86" width="417" height="334" fill="#fff"/>
<rect x="204" y="86" width="145" height="15" fill="#000"/>
<rect x="204" y="86" width="144" height="14" fill="#fff"/>
<rect x="205" y="87" width="143" height="13" fill="#808080"/>
<rect x="205" y="87" width="142" height="12" fill="#c0c0c0"/>
<rect x="349" y="86" width="48" height="15" fill="#000"/>
<rect x="349" y="86" width="47" height="14" fill="#fff"/>
<rect x="350" y="87" width="46" height="13" fill="#808080"/>
<rect x="350" y="87" width="45" height="12" fill="#c0c0c0"/>
<rect x="397" y="86" width="90" height="15" fill="#000"/>
<rect x="397" y="86" width="89" height="14" fill="#fff"/>
<rect x="398" y="87" width="88" height="13" fill="#808080"/>
<rect x="398" y="87" width="87" height="12" fill="#c0c0c0"/>
<rect x="487" y="86" width="90" height="15" fill="#000"/>
<rect x="487" y="86" width="89" height="14" fill="#fff"/>
<rect x="488" y="87" width="88" height="13" fill="#808080"/>
<rect x="488" y="87" width="87" height="12" fill="#c0c0c0"/>
<rect x="577" y="86" width="47" height="15" fill="#000"/>
<rect x="577" y="86" width="46" height="14" fill="#fff"/>
<rect x="578" y="87" width="45" height="13" fill="#808080"/>
<rect x="578" y="87" width="44" height="12" fill="#c0c0c0"/>
<rect x="621" y="85" width="1" height="336" fill="#dfdfdf"/>
<rect x="622" y="84" width="1" height="338" fill="#fff"/>
<text x="210.3" y="97.8" font-size="11.5" fill="#000" textLength="28.4" lengthAdjust="spacingAndGlyphs">Name</text>
<text x="371.8" y="97.8" font-size="11.5" fill="#000" textLength="19.9" lengthAdjust="spacingAndGlyphs">Size</text>
<text x="403.3" y="97.8" font-size="11.5" fill="#000" textLength="23.9" lengthAdjust="spacingAndGlyphs">Type</text>
<text x="492.3" y="97.8" font-size="11.5" fill="#000" textLength="39.9" lengthAdjust="spacingAndGlyphs">Modified</text>
<rect x="207" y="103" width="6" height="1" fill="#808080"/>
<rect x="206" y="104" width="1" height="11" fill="#808080"/>
<rect x="213" y="104" width="1" height="1" fill="#808080"/>
<rect x="214" y="105" width="6" height="1" fill="#808080"/>
<rect x="207" y="104" width="6" height="2" fill="url(#ydith)"/>
<rect x="207" y="106" width="13" height="1" fill="#fff"/>
<rect x="207" y="106" width="1" height="9" fill="#fff"/>
<rect x="208" y="107" width="12" height="8" fill="url(#ydith)"/>
<rect x="220" y="106" width="1" height="10" fill="#000"/>
<rect x="207" y="115" width="14" height="1" fill="#000"/>
<rect x="207" y="119" width="6" height="1" fill="#808080"/>
<rect x="206" y="120" width="1" height="11" fill="#808080"/>
<rect x="213" y="120" width="1" height="1" fill="#808080"/>
<rect x="214" y="121" width="6" height="1" fill="#808080"/>
<rect x="207" y="120" width="6" height="2" fill="url(#ydith)"/>
<rect x="207" y="122" width="13" height="1" fill="#fff"/>
<rect x="207" y="122" width="1" height="9" fill="#fff"/>
<rect x="208" y="123" width="12" height="8" fill="url(#ydith)"/>
<rect x="220" y="122" width="1" height="10" fill="#000"/>
<rect x="207" y="131" width="14" height="1" fill="#000"/>
<text x="224.3" y="114.4" font-size="11.5" fill="#000" textLength="60.9" lengthAdjust="spacingAndGlyphs">Picture Files l</text>
<text x="224.3" y="130.5" font-size="11.5" fill="#000" textLength="80.9" lengthAdjust="spacingAndGlyphs">M_Z Picture Files</text>
<text x="403.3" y="114.6" font-size="11.5" fill="#000" textLength="47.4" lengthAdjust="spacingAndGlyphs">File Folder</text>
<text x="492.3" y="114.6" font-size="11.5" fill="#000" textLength="75.4" lengthAdjust="spacingAndGlyphs">5/6/98 3:26 PM</text>
<text x="403.3" y="130.6" font-size="11.5" fill="#000" textLength="47.4" lengthAdjust="spacingAndGlyphs">File Folder</text>
<text x="492.3" y="130.6" font-size="11.5" fill="#000" textLength="75.4" lengthAdjust="spacingAndGlyphs">5/6/98 3:26 PM</text>
<rect x="0" y="424" width="140" height="16" fill="#fff"/>
<rect x="0" y="424" width="139" height="15" fill="#808080"/>
<rect x="1" y="425" width="138" height="14" fill="#c0c0c0"/>
<text x="3.3" y="436.2" font-size="11.5" fill="#000" textLength="89.9" lengthAdjust="spacingAndGlyphs">1 object(s) selected</text>
<rect x="142" y="424" width="481" height="16" fill="#fff"/>
<rect x="142" y="424" width="480" height="15" fill="#808080"/>
<rect x="143" y="425" width="479" height="14" fill="#c0c0c0"/>
<rect x="0" y="441" width="623" height="1" fill="#fff"/></svg></body></html>
